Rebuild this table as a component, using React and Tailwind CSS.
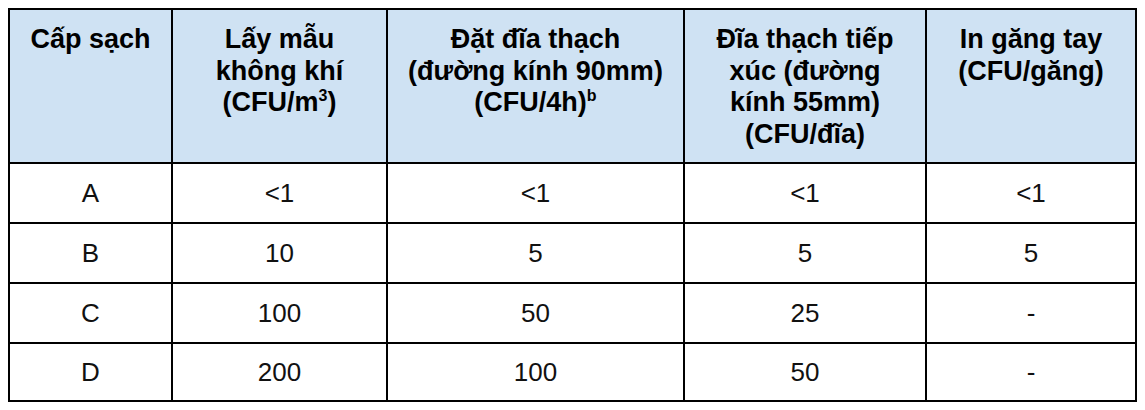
import React from "react";

const rows = [
  ["A", "<1", "<1", "<1", "<1"],
  ["B", "10", "5", "5", "5"],
  ["C", "100", "50", "25", "-"],
  ["D", "200", "100", "50", "-"],
];

const App = () => {
  return (
    <div className="bg-white w-[1145px] h-[410px] pt-2 pl-2" style={{ fontFamily: '"Liberation Sans", Arial, sans-serif' }}>
      <table className="table-fixed border-collapse w-[1127px] text-black">
        <colgroup>
          <col className="w-[163px]" />
          <col className="w-[215px]" />
          <col className="w-[297px]" />
          <col className="w-[242px]" />
          <col className="w-[210px]" />
        </colgroup>
        <thead>
          <tr className="h-[154px] bg-[#cfe2f3] text-[27px] leading-[31.5px]">
            <th className="border-2 border-black align-top pt-[14px] px-1 font-bold">Cấp sạch</th>
            <th className="border-2 border-black align-top pt-[14px] px-1 font-bold">
              Lấy mẫu<br />không khí<br />(CFU/m<sup className="text-[16px] -top-[0.6em]">3</sup>)
            </th>
            <th className="border-2 border-black align-top pt-[14px] px-1 font-bold">
              Đặt đĩa thạch<br />(đường kính 90mm)<br />(CFU/4h)<sup className="text-[16px] -top-[0.6em]">b</sup>
            </th>
            <th className="border-2 border-black align-top pt-[14px] px-1 font-bold">
              Đĩa thạch tiếp<br />xúc (đường<br />kính 55mm)<br />(CFU/đĩa)
            </th>
            <th className="border-2 border-black align-top pt-[14px] px-1 font-bold">
              In găng tay<br />(CFU/găng)
            </th>
          </tr>
        </thead>
        <tbody>
          {rows.map((r, i) => (
            <tr key={i} className={i === 3 ? "h-[58px]" : "h-[60px]"}>
              {r.map((c, j) => (
                <td key={j} className="border-2 border-black text-center align-middle text-[26px] text-[#111]">
                  {c}
                </td>
              ))}
            </tr>
          ))}
        </tbody>
      </table>
    </div>
  );
};

export default App;
